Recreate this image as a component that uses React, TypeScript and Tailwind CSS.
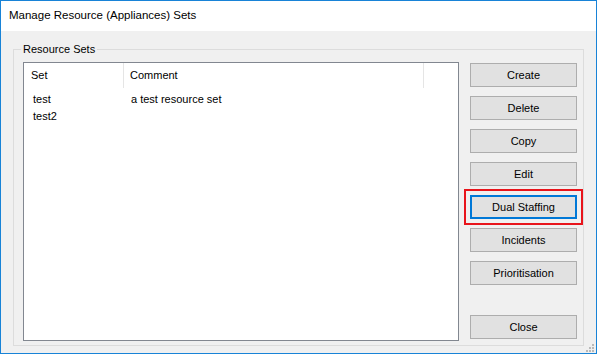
const buttons = ["Create", "Delete", "Copy", "Edit", "Dual Staffing", "Incidents", "Prioritisation"];

const rows = [
  { set: "test", comment: "a test resource set" },
  { set: "test2", comment: "" },
];

const WinButton = ({ label, focused }: { label: string; focused?: boolean }) => (
  <button
    className={
      "h-[24px] w-[107px] shrink-0 bg-[#e1e1e1] text-[11px] text-black " +
      (focused
        ? "border-2 border-[#0078d7] outline-2 outline-[#e8141b] outline-offset-[4px]"
        : "border border-[#adadad]")
    }
  >
    {label}
  </button>
);

export default function App() {
  return (
    <div className="relative flex h-[354px] w-[597px] flex-col border border-[#1883d7] bg-[#f0f0f0] font-['Liberation_Sans',Arial,sans-serif] text-black">
      <div className="flex h-[30px] shrink-0 items-center bg-white pl-[8px] text-[11.5px]">
        Manage Resource (Appliances) Sets
      </div>

      <div className="flex-1 pl-[12px] pr-[12px] pt-[18px]">
        <div className="relative flex h-[297px] w-[571px] border border-[#dcdcdc] pb-[4px] pl-[9px] pr-[5px] pt-[12px]">
          <span className="absolute left-[7px] top-[-8px] bg-[#f0f0f0] px-[2px] text-[11px] leading-[14px]">
            Resource Sets
          </span>

          <div className="h-[279px] w-[436px] border border-[#828790] bg-white text-[11px]">
            <div className="flex h-[25px] items-stretch">
              <div className="flex w-[100px] items-center border-r border-[#e5e5e5] pl-[7px]">Set</div>
              <div className="flex w-[300px] items-center border-r border-[#e5e5e5] pl-[6px]">Comment</div>
            </div>
            <div className="pt-[3px]">
              {rows.map((r) => (
                <div key={r.set} className="flex h-[17px] items-center">
                  <div className="w-[101px] pl-[9px]">{r.set}</div>
                  <div className="pl-[6px]">{r.comment}</div>
                </div>
              ))}
            </div>
          </div>

          <div className="ml-[11px] flex flex-col gap-[9px] pb-[2px] pt-[1px]">
            {buttons.map((b) => (
              <WinButton key={b} label={b} focused={b === "Dual Staffing"} />
            ))}
            <div className="mt-auto">
              <WinButton label="Close" />
            </div>
          </div>
        </div>
      </div>

      <svg className="absolute bottom-[1px] right-[2px]" width="8" height="8" viewBox="0 0 8 8">
        <rect x="6" y="0" width="2" height="2" fill="#b9b9b9" />
        <rect x="3" y="3" width="2" height="2" fill="#b9b9b9" />
        <rect x="6" y="3" width="2" height="2" fill="#b9b9b9" />
        <rect x="0" y="6" width="2" height="2" fill="#b9b9b9" />
        <rect x="3" y="6" width="2" height="2" fill="#b9b9b9" />
        <rect x="6" y="6" width="2" height="2" fill="#b9b9b9" />
      </svg>
    </div>
  );
}
